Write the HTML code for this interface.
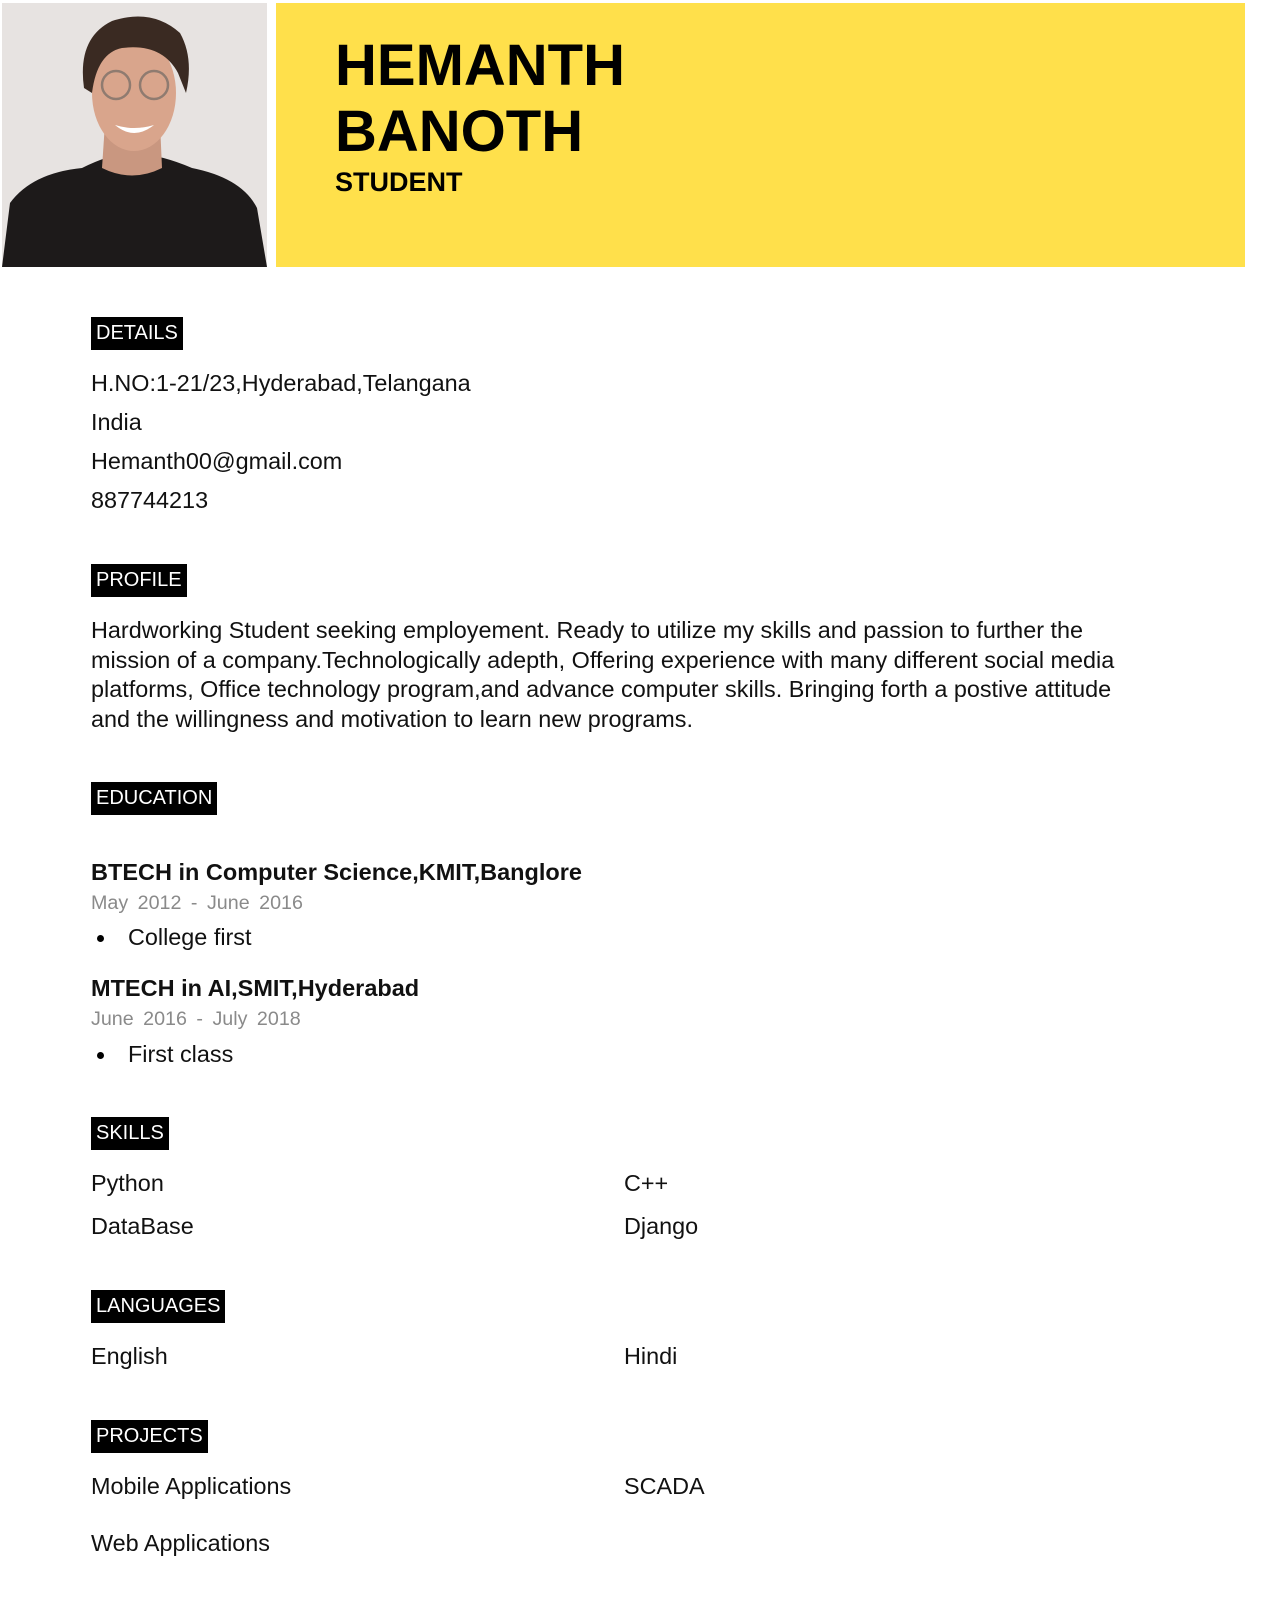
<!DOCTYPE html>
<html><head><meta charset="utf-8"><style>
body{margin:0;width:1275px;height:1604px;background:#fff;font-family:"Liberation Sans",Arial,sans-serif;color:#111;position:relative;overflow:hidden}
.a{position:absolute;white-space:nowrap}
.t{font-size:23.4px;line-height:30px;height:30px}
.lab{position:absolute;left:91px;background:#000;color:#fff;font-size:20px;line-height:33px;height:33px;padding:0 5px}
.b{font-weight:bold;font-size:23.5px;line-height:30px}
.d{color:#8a8a8a;font-size:19.7px;line-height:30px;word-spacing:4px}
.bul{position:absolute;left:97px;width:7px;height:7px;border-radius:50%;background:#000}
</style></head><body>
<svg class="a" style="left:2px;top:3px" width="265" height="264" viewBox="0 0 265 264">
<rect width="265" height="264" fill="#e7e3e1"/>
<path d="M0 264 L8 200 Q30 170 80 165 Q110 150 132 150 Q160 152 190 165 Q240 175 255 205 L265 264Z" fill="#1d1a1a"/>
<path d="M103 120 L100 165 Q130 180 160 165 L158 120Z" fill="#c99780"/>
<ellipse cx="132" cy="90" rx="42" ry="58" fill="#d9a58c"/>
<path d="M82 85 Q75 35 110 18 Q150 5 178 30 Q192 55 184 90 L176 70 Q160 40 120 45 Q95 50 90 90Z" fill="#3a2a22"/>
<circle cx="114" cy="82" r="14" fill="none" stroke="#8f7b70" stroke-width="2.5"/>
<circle cx="152" cy="82" r="14" fill="none" stroke="#8f7b70" stroke-width="2.5"/>
<path d="M113 122 Q132 138 152 122 Q132 128 113 122Z" fill="#fff"/>
</svg>
<div class="a" style="left:276px;top:3px;width:969px;height:264px;background:#ffe04b"></div>
<div class="a" style="left:335px;top:33px;font-weight:bold;font-size:58px;line-height:66px;color:#000">HEMANTH</div>
<div class="a" style="left:335px;top:99px;font-weight:bold;font-size:58px;line-height:66px;color:#000">BANOTH</div>
<div class="a" style="left:335px;top:166px;font-weight:bold;font-size:27px;line-height:32px;color:#000">STUDENT</div>

<div class="lab" style="top:317px">DETAILS</div>
<div class="a t" style="left:91px;top:368px">H.NO:1-21/23,Hyderabad,Telangana</div>
<div class="a t" style="left:91px;top:407px">India</div>
<div class="a t" style="left:91px;top:446px">Hemanth00@gmail.com</div>
<div class="a t" style="left:91px;top:485px">887744213</div>

<div class="lab" style="top:564px">PROFILE</div>
<div class="a" style="left:91px;top:616px;width:1100px;white-space:normal;font-size:23.4px;line-height:29.5px">Hardworking Student seeking employement. Ready to utilize my skills and passion to further the<br>mission of a company.Technologically adepth, Offering experience with many different social media<br>platforms, Office technology program,and advance computer skills. Bringing forth a postive attitude<br>and the willingness and motivation to learn new programs.</div>

<div class="lab" style="top:782px">EDUCATION</div>
<div class="a b" style="left:91px;top:857px">BTECH in Computer Science,KMIT,Banglore</div>
<div class="a d" style="left:91px;top:888px">May 2012 - June 2016</div>
<div class="bul" style="top:935px"></div>
<div class="a t" style="left:128px;top:922px">College first</div>
<div class="a b" style="left:91px;top:973px">MTECH in AI,SMIT,Hyderabad</div>
<div class="a d" style="left:91px;top:1004px">June 2016 - July 2018</div>
<div class="bul" style="top:1052px"></div>
<div class="a t" style="left:128px;top:1039px">First class</div>

<div class="lab" style="top:1117px">SKILLS</div>
<div class="a t" style="left:91px;top:1168px">Python</div>
<div class="a t" style="left:624px;top:1168px">C++</div>
<div class="a t" style="left:91px;top:1211px">DataBase</div>
<div class="a t" style="left:624px;top:1211px">Django</div>

<div class="lab" style="top:1290px">LANGUAGES</div>
<div class="a t" style="left:91px;top:1341px">English</div>
<div class="a t" style="left:624px;top:1341px">Hindi</div>

<div class="lab" style="top:1420px">PROJECTS</div>
<div class="a t" style="left:91px;top:1471px">Mobile Applications</div>
<div class="a t" style="left:624px;top:1471px">SCADA</div>
<div class="a t" style="left:91px;top:1528px">Web Applications</div>
</body></html>
